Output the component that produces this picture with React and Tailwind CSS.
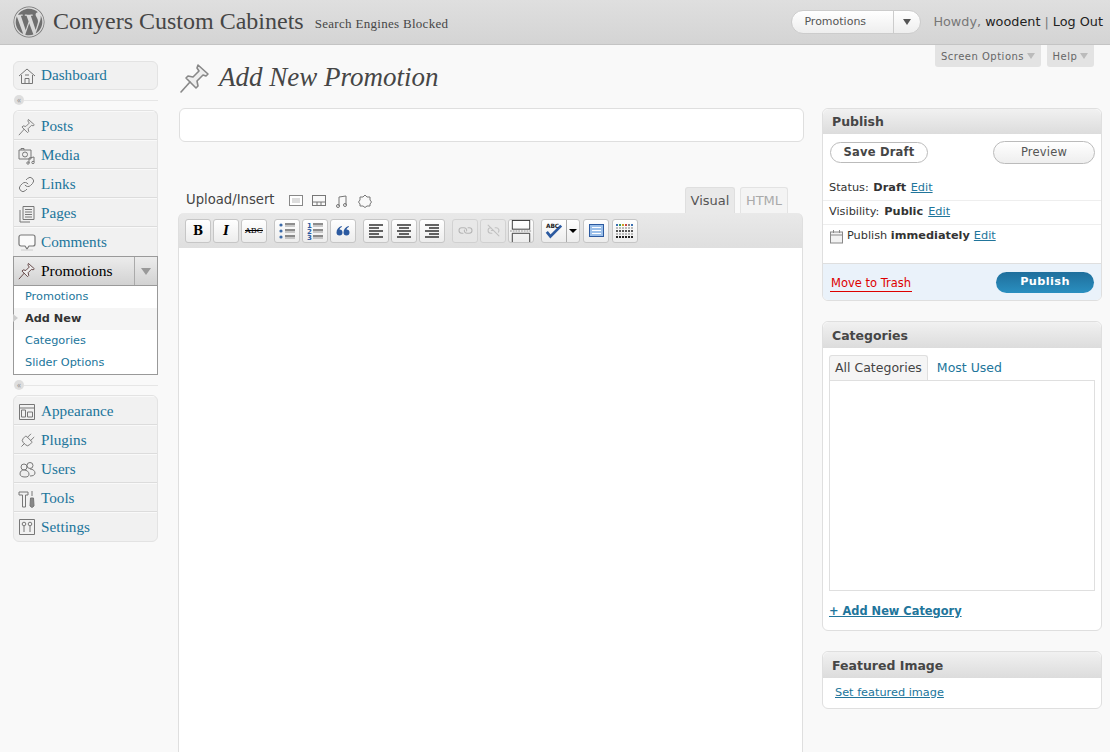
import React from "react";
import { FaWordpress } from "react-icons/fa";
import { Link as LinkIcon, Link2Off, Plug } from "lucide-react";

const serif = "font-['Liberation_Serif',serif]";
const sans = "font-['DejaVu_Sans',sans-serif]";
const dserif = "font-['DejaVu_Serif',serif]";

const PinIcon = ({ className, color = "#777" }) => (
  <svg viewBox="0 0 32 32" className={className} fill="none" stroke={color} strokeWidth="1.6" strokeLinejoin="round" strokeLinecap="round">
    <path d="M19 3l10 9-2 2-3-1-6 6 1 5-2 2-10-10 2-2 5 1 6-6-2-3z" fill="#eee" />
    <path d="M11 20L2 30" />
  </svg>
);

// menu icons drawn to match the old admin sprite
const Ico = ({ children }) => (
  <svg viewBox="0 0 18 18" className="w-[18px] h-[18px]" fill="none" stroke="#777" strokeWidth="1" strokeLinejoin="round">
    {children}
  </svg>
);

const HomeIcon = () => (
  <Ico>
    <path d="M1 9l8-7 8 7" />
    <path d="M3.500 8v8.500h11V8" />
    <path d="M7 16.500v-5h4v5M7 8h4" />
  </Ico>
);
const MediaIcon = () => (
  <Ico>
    <rect x="1" y="3" width="12" height="9" fill="#eee" />
    <circle cx="7" cy="7.500" r="2.500" />
    <path d="M3 3V1.500h3V3" />
    <path d="M11 16V11l5-1v5" />
    <circle cx="10" cy="16" r="1.200" />
    <circle cx="15" cy="15.500" r="1.200" />
  </Ico>
);
const PagesIcon = () => (
  <Ico>
    <path d="M2 5v12h10" />
    <rect x="5" y="1.500" width="11" height="13" fill="#eee" />
    <path d="M7 4.500h7M7 7h7M7 9.500h7M7 12h7" />
  </Ico>
);
const CommentIcon = () => (
  <Ico>
    <path d="M3 2h12a2 2 0 0 1 2 2v7a2 2 0 0 1-2 2h-4l-2 3-2-3H3a2 2 0 0 1-2-2V4a2 2 0 0 1 2-2z" fill="#fafafa" strokeWidth="1.200" />
    <path d="M3 17h12" stroke="#ccc" />
  </Ico>
);
const AppearanceIcon = () => (
  <Ico>
    <rect x="1.500" y="1.500" width="15" height="15" />
    <path d="M1.500 5h15" />
    <rect x="3.500" y="7" width="4" height="7" />
    <rect x="9.500" y="9" width="5" height="5" />
  </Ico>
);
const UsersIcon = () => (
  <Ico>
    <circle cx="6" cy="6" r="3" />
    <circle cx="12" cy="4.500" r="3" />
    <path d="M2 13c0-3 2-4 4-4 3 0 5 2 5 4s-1 3-4 3-5-1-5-3z" fill="#eee" />
    <path d="M12 8c3 0 5 2 5 4 0 2-2 3-5 3" />
  </Ico>
);
const ToolsIcon = () => (
  <Ico>
    <path d="M1 2h9v3H7.500v12h-3V5H1z" />
    <path d="M14 1v5M12.500 8h3l.5 8-2 1.500-2-1.500z" fill="#888" />
  </Ico>
);
const SettingsIcon = () => (
  <Ico>
    <rect x="1.500" y="1.500" width="15" height="15" />
    <circle cx="6" cy="6" r="1.800" />
    <path d="M6 8v6" />
    <circle cx="12" cy="6" r="1.800" />
    <path d="M12 8v6" />
  </Ico>
);

const MenuRow = ({ icon, label, last }) => (
  <div className={`flex items-center h-[29px] pl-[4px] ${last ? "" : "border-b border-b-[#dcdcdc] pt-[2px]"} border-t border-t-[#f9f9f9]`}>
    <span className="w-[23px] flex items-center text-[#777]">{icon}</span>
    <a className={`${serif} text-[15.2px] text-[#21759b]`}>{label}</a>
  </div>
);

const MenuSep = () => (
  <div className="flex items-center h-[20px]">
    <span className="w-[10px] h-[10px] ml-[1px] rounded-full bg-[#dedede] text-[#999] text-[8px] leading-[9px] text-center">«</span>
    <span className="flex-1 h-px bg-[#e6e6e6]" />
  </div>
);

const Sidebar = () => (
  <aside className="w-[145px] ml-[13px] shrink-0 pt-[16px]">
    <div className="rounded-[6px] border border-[#e3e3e3] bg-[#f1f1f1] overflow-hidden">
      <div className="flex items-center h-[27px] pl-[4px]">
        <span className="w-[23px] flex items-center"><HomeIcon /></span>
        <a className={`${serif} text-[15.2px] text-[#21759b]`}>Dashboard</a>
      </div>
    </div>
    <MenuSep />
    <div className="rounded-t-[6px] border-x border-t border-[#e3e3e3] bg-[#f1f1f1] overflow-hidden">
      <MenuRow icon={<PinIcon className="w-[18px] h-[18px]" />} label="Posts" />
      <MenuRow icon={<MediaIcon />} label="Media" />
      <MenuRow icon={<LinkIcon size={17} strokeWidth={1.4} />} label="Links" />
      <MenuRow icon={<PagesIcon />} label="Pages" />
      <MenuRow icon={<CommentIcon />} label="Comments" last />
    </div>
    <div className="flex h-[30px] border border-[#9a9a9a] bg-gradient-to-b from-[#ececec] to-[#d2d2d2]">
      <div className="flex items-center flex-1 pl-[4px] border-r border-r-[#aaa]">
        <span className="w-[23px]"><PinIcon className="w-[18px] h-[18px]" color="#5a3a3a" /></span>
        <span className={`${serif} text-[15.5px] text-black`}>Promotions</span>
      </div>
      <div className="w-[22px] flex items-center justify-center">
        <span className="w-0 h-0 border-x-[5px] border-x-transparent border-t-[7px] border-t-[#999]" />
      </div>
    </div>
    <div className={`relative bg-white border-x border-b border-[#999] ${sans} text-[11.3px] text-[#21759b]`}>
      <div className="h-[22px] flex items-center pl-[11px]">Promotions</div>
      <div className="h-[22px] flex items-center pl-[11px] bg-[#f5f5f5] font-bold text-[#333]">Add New</div>
      <span className="absolute left-[-1px] top-[28px] w-0 h-0 border-y-[4px] border-y-transparent border-l-[5px] border-l-[#ccc]" />
      <div className="h-[22px] flex items-center pl-[11px]">Categories</div>
      <div className="h-[22px] flex items-center pl-[11px]">Slider Options</div>
    </div>
    <MenuSep />
    <div className="rounded-[6px] border border-[#e3e3e3] bg-[#f1f1f1] overflow-hidden">
      <MenuRow icon={<AppearanceIcon />} label="Appearance" />
      <MenuRow icon={<Plug size={18} strokeWidth={1.2} className="rotate-45" />} label="Plugins" />
      <MenuRow icon={<UsersIcon />} label="Users" />
      <MenuRow icon={<ToolsIcon />} label="Tools" />
      <MenuRow icon={<SettingsIcon />} label="Settings" last />
    </div>
  </aside>
);

const Lines = ({ kind }) => {
  const rows = [5, 8, 11, 14, 17];
  const x = (i) => {
    const long = i % 2 === 0;
    if (kind === "left") return [4, long ? 18 : 14];
    if (kind === "center") return long ? [4, 18] : [6, 16];
    return [long ? 4 : 8, 18];
  };
  return (
    <svg viewBox="0 0 22 22" className="w-[22px] h-[22px]" stroke="#111" strokeWidth="1.3">
      {rows.map((y, i) => <line key={y} x1={x(i)[0]} x2={x(i)[1]} y1={y} y2={y} />)}
    </svg>
  );
};

const ListIcon = ({ numbered }) => (
  <svg viewBox="0 0 22 22" className="w-[22px] h-[22px]">
    {[5, 11, 17].map((y, i) => (
      <g key={y}>
        {numbered
          ? <text x="3" y={y + 3} fontSize="7" fontWeight="700" fill="#2c5aa0" fontFamily="DejaVu Sans">{i + 1}</text>
          : <circle cx="5" cy={y} r="1.6" fill="#3b6aa8" />}
        <line x1="9" x2="19" y1={y - 1} y2={y - 1} stroke="#333" strokeWidth="1.1" />
        <line x1="9" x2="19" y1={y + 1} y2={y + 1} stroke="#999" strokeWidth="1" />
      </g>
    ))}
  </svg>
);

const Btn = ({ children, faded }) => (
  <div className={`w-[26px] h-[24px] flex items-center justify-center rounded-[3px] border border-[#c6c6c6] ${faded ? "bg-[#eaeaea] opacity-60" : "bg-gradient-to-b from-white to-[#ececec]"}`}>
    {children}
  </div>
);

const Toolbar = () => (
  <div className="h-[35px] rounded-t-[6px] border-x border-[#dfdfdf] bg-gradient-to-b from-[#e9e9e9] to-[#dfdfdf] flex items-center pl-[6px] gap-[7px]">
    <div className="flex gap-[2px]">
      <Btn><b className={`${dserif} text-[12px] text-black font-bold`}>B</b></Btn>
      <Btn><i className={`${dserif} text-[12px] text-black font-bold`}>I</i></Btn>
      <Btn><span className={`${dserif} text-[8px] text-black line-through`}>ABC</span></Btn>
    </div>
    <div className="flex gap-[2px]">
      <Btn><ListIcon /></Btn>
      <Btn><ListIcon numbered /></Btn>
      <Btn>
        <svg viewBox="0 0 14 10" className="w-[14px] h-[10px]" fill="#2c5aa0">
          <path d="M5.500 0C2.500 1 .5 3.500.5 6.500a3 3 0 1 0 3-3c.2-1 1-2 2.500-2.800z" />
          <path d="M12.500 0C9.500 1 7.500 3.500 7.500 6.500a3 3 0 1 0 3-3c.2-1 1-2 2.500-2.800z" />
        </svg>
      </Btn>
    </div>
    <div className="flex gap-[2px]">
      <Btn><Lines kind="left" /></Btn>
      <Btn><Lines kind="center" /></Btn>
      <Btn><Lines kind="right" /></Btn>
    </div>
    <div className="flex gap-[2px]">
      <Btn faded><LinkIcon size={13} className="text-[#999] rotate-45" /></Btn>
      <Btn faded><Link2Off size={13} className="text-[#aaa]" /></Btn>
      <Btn>
        <svg viewBox="0 0 24 24" className="w-[24px] h-[22px]" fill="none" stroke="#333">
          <rect x="2.500" y="0.500" width="19" height="9.500" />
          <path d="M2.500 24V14.500h19V24" />
          <line x1="0" x2="24" y1="12" y2="12" stroke="#888" strokeDasharray="2 1" />
        </svg>
      </Btn>
    </div>
    <div className="flex gap-[3px]">
      <div className="w-[39px] h-[24px] flex rounded-[3px] border border-[#c6c6c6] bg-gradient-to-b from-white to-[#ececec]">
        <div className="w-[25px] flex items-center justify-center border-r border-r-[#aaa]">
          <svg viewBox="0 0 22 20" className="w-[20px] h-[18px]" fill="none">
            <path d="M3 11l4 5L19 4" stroke="#2c5aa0" strokeWidth="3" />
            <text x="2" y="7" fontSize="6.500" fontWeight="700" fill="#222" fontFamily="DejaVu Sans">ABC</text>
          </svg>
        </div>
        <div className="flex-1 flex items-center justify-center">
          <span className="w-0 h-0 border-x-[4px] border-x-transparent border-t-[4px] border-t-black" />
        </div>
      </div>
      <Btn><span className="w-[15px] h-[13px] border border-[#2c5aa0] bg-[#9cc0ea] flex flex-col justify-center gap-[2px] px-[2px]"><span className="h-px bg-white" /><span className="h-px bg-white" /><span className="h-px bg-white" /></span></Btn>
      <Btn>
        <svg viewBox="0 0 18 16" className="w-[18px] h-[16px]">
          {[2, 5, 8, 11, 14].flatMap((y, r) =>
            [1, 4, 7, 10, 13, 16].map((x, c) => (
              <rect key={`${r}-${c}`} x={x - 1} y={y - 1} width="2" height="2" fill={r === 0 ? ["#3a6fb0", "#3a9f5a", "#c9a227", "#c44", "#888", "#3a6fb0"][c] : r === 4 ? "#222" : r === 2 ? "#555" : "#bbb"} />
            ))
          )}
        </svg>
      </Btn>
    </div>
  </div>
);

const Editor = () => (
  <main className="flex-1 min-w-0 pl-[21px] relative">
    <div className="h-[63px] flex items-center">
      <PinIcon className="w-[32px] h-[32px] mr-[8px] mt-[3px]" color="#888" />
      <h1 className={`${serif} italic text-[27px] text-[#464646] mt-[2px]`}>Add New Promotion</h1>
    </div>
    <div className="h-[34px] w-[625px] rounded-[6px] border border-[#dfdfdf] bg-white" />
    <div className="w-[625px] h-[71px] flex items-end pl-[7px]">
      <div className={`flex items-center h-[26px] gap-[9px] ${sans} text-[13.2px] text-[#444]`}>
        <span className="mr-[6px]">Upload/Insert</span>
        <svg viewBox="0 0 14 12" className="w-[14px] h-[12px] mt-[2px]" fill="#ddd" stroke="#888"><rect x=".5" y=".5" width="13" height="10" fill="#fff" /><rect x="3" y="3" width="8" height="5" stroke="none" /></svg>
        <svg viewBox="0 0 14 12" className="w-[14px] h-[12px] mt-[2px]" fill="none" stroke="#777"><rect x=".5" y=".5" width="13" height="10" /><path d="M.5 7h13M5 7v4M9 7v4" /></svg>
        <svg viewBox="0 0 14 14" className="w-[14px] h-[14px] mt-[2px]" fill="none" stroke="#777"><path d="M4 12V3l7-1v9" /><circle cx="3" cy="12" r="1.500" /><circle cx="10" cy="11" r="1.500" /></svg>
        <svg viewBox="0 0 14 14" className="w-[14px] h-[14px] mt-[2px]" fill="none" stroke="#777"><path d="M7 1l2 2h3v3l1.500 2-1.500 2v2H9l-2 1.500-2-1.500H2v-2L.5 8 2 6V3h3z" /></svg>
      </div>
      <div className="ml-auto mr-[16px] flex gap-[5px]">
        <div className={`h-[26px] w-[50px] pt-[1px] flex items-center justify-center rounded-t-[3px] border-x border-t border-[#dfdfdf] bg-[#e9e9e9] ${sans} text-[13px] text-[#555]`}>Visual</div>
        <div className={`h-[26px] w-[48px] pt-[1px] flex items-center justify-center rounded-t-[3px] border-x border-t border-[#e3e3e3] bg-[#f4f4f4] ${sans} text-[13px] text-[#aaa]`}>HTML</div>
      </div>
    </div>
    <div className="w-[625px] -ml-px">
      <Toolbar />
      <div className="h-[600px] bg-white border-x border-[#dfdfdf]" />
    </div>
  </main>
);

const BoxHead = ({ children, h = "h-[26px]" }) => (
  <div className={`${h} pt-[2px] flex items-center pl-[9px] rounded-t-[6px] bg-gradient-to-b from-[#f1f1f1] to-[#dcdcdc] ${sans} text-[12.5px] font-bold text-[#464646]`}>
    {children}
  </div>
);

const EditLink = () => <a className="text-[#21759b] underline font-normal">Edit</a>;

const Side = () => (
  <aside className={`w-[280px] mr-[8px] ml-[18px] shrink-0 pt-[63px] ${sans} text-[11.3px] text-[#333]`}>
    <div className="rounded-[6px] border border-[#dfdfdf] bg-white overflow-hidden">
      <BoxHead h="h-[25px]">Publish</BoxHead>
      <div className="flex items-center justify-between h-[36px] pl-[7px] pr-[6px]">
        <div className="w-[98px] h-[21px] pt-[2px] rounded-full border border-[#bbb] flex items-center justify-center font-bold text-[11.5px] tracking-[.2px] text-[#464646]">Save Draft</div>
        <div className="w-[102px] h-[23px] pt-[2px] rounded-full border border-[#bbb] bg-gradient-to-b from-white to-[#eee] flex items-center justify-center text-[11.5px] tracking-[.2px] text-[#555]">Preview</div>
      </div>
      <div className="h-[24px] pl-[6px] flex items-center gap-[4.5px] border-b border-b-[#eee] mt-[7px]">Status: <b>Draft</b> <EditLink /></div>
      <div className="h-[24px] pl-[6px] flex items-center gap-[5px] border-b border-b-[#eee]">Visibility: <b>Public</b> <EditLink /></div>
      <div className="h-[23px] pl-[7px] flex items-center gap-[4px]">
        <svg viewBox="0 0 13 14" className="w-[13px] h-[14px]" fill="#f2f2f2" stroke="#888"><rect x=".5" y="2" width="12" height="11" /><path d="M.5 5h12M3.500 0v3M9.500 0v3" /></svg>
        <span>Publish <b>immediately</b></span> <EditLink />
      </div>
      <div className="mt-[15px] h-[37px] bg-[#eaf2fa] border-t border-t-[#dfdfdf] flex items-center justify-between pl-[7px] pr-[7px]">
        <a className="text-[#d00] text-[11.5px] leading-[15px] mt-[3px] border-b border-b-[#d00] px-px">Move to Trash</a>
        <div className="w-[98px] h-[21px] rounded-full bg-gradient-to-b from-[#1f6f9c] to-[#2a8fc0] flex items-center justify-center text-white font-bold tracking-[.4px]">Publish</div>
      </div>
    </div>

    <div className="rounded-[6px] border border-[#dfdfdf] bg-white overflow-hidden mt-[20px] h-[310px]">
      <BoxHead>Categories</BoxHead>
      <div className="flex mt-[7px] ml-[6px] h-[25px] items-end text-[12.5px]">
        <div className="h-[25px] pt-[1px] px-[5px] flex items-center rounded-t-[3px] border-x border-t border-[#dfdfdf] bg-[#f5f5f5] text-[#444]">All Categories</div>
        <div className="h-[25px] pt-[1px] px-[9px] flex items-center text-[#21759b]">Most Used</div>
      </div>
      <div className="ml-[6px] mr-[6px] h-[211px] border border-[#dfdfdf]" />
      <a className="block mt-[12px] ml-[6px] font-bold text-[#21759b] underline text-[11.4px]">+ Add New Category</a>
    </div>

    <div className="rounded-[6px] border border-[#dfdfdf] bg-white overflow-hidden mt-[20px]">
      <BoxHead>Featured Image</BoxHead>
      <div className="h-[30px] pl-[12px] flex items-center"><a className="text-[#21759b] underline">Set featured image</a></div>
    </div>
  </aside>
);

export default function App() {
  return (
    <div className="relative w-[1110px] h-[752px] overflow-hidden bg-[#f9f9f9]">
      <header className="h-[45px] flex items-center border-b border-b-[#c4c4c4] bg-gradient-to-b from-[#dfdfdf] to-[#d4d4d4]">
        <FaWordpress size={32} className="ml-[13px] mr-[8px] text-[#6f6f6f]" />
        <span className={`${serif} text-[24px] text-[#464646] -mt-[2px]`}>Conyers Custom Cabinets</span>
        <span className={`${serif} text-[13px] tracking-[.3px] text-[#464646] ml-[11px] mt-[4px]`}>Search Engines Blocked</span>
        <div className={`ml-auto mr-[7px] flex items-center ${sans} text-[12.8px]`}>
          <div className="w-[130px] h-[24px] flex rounded-full border border-[#ccc] bg-gradient-to-b from-white to-[#eee] text-[11px] text-[#555] mr-[12px] overflow-hidden">
            <span className="flex-1 flex items-center pl-[12px] border-r border-r-[#ccc]">Promotions</span>
            <span className="w-[26px] flex items-center justify-center"><span className="w-0 h-0 border-x-[4px] border-x-transparent border-t-[6px] border-t-[#555]" /></span>
          </div>
          <span className="text-[#777]">Howdy,&nbsp;</span>
          <span className="text-[#222]">woodent</span>
          <span className="text-[#777]">&nbsp;|&nbsp;</span>
          <span className="text-[#222]">Log Out</span>
        </div>
      </header>
      <div className={`absolute right-[16px] top-[45px] flex gap-[6px] ${sans} text-[10px] tracking-[.5px] text-[#666]`}>
        <div className="h-[22px] w-[106px] flex items-center justify-center gap-[3px] rounded-b-[3px] bg-[#e3e3e3]">Screen Options<span className="w-0 h-0 border-x-[4px] border-x-transparent border-t-[6px] border-t-[#bbb]" /></div>
        <div className="h-[22px] w-[47px] flex items-center justify-center gap-[3px] rounded-b-[3px] bg-[#e3e3e3]">Help<span className="w-0 h-0 border-x-[4px] border-x-transparent border-t-[6px] border-t-[#bbb]" /></div>
      </div>
      <div className="flex">
        <Sidebar />
        <Editor />
        <Side />
      </div>
    </div>
  );
}
